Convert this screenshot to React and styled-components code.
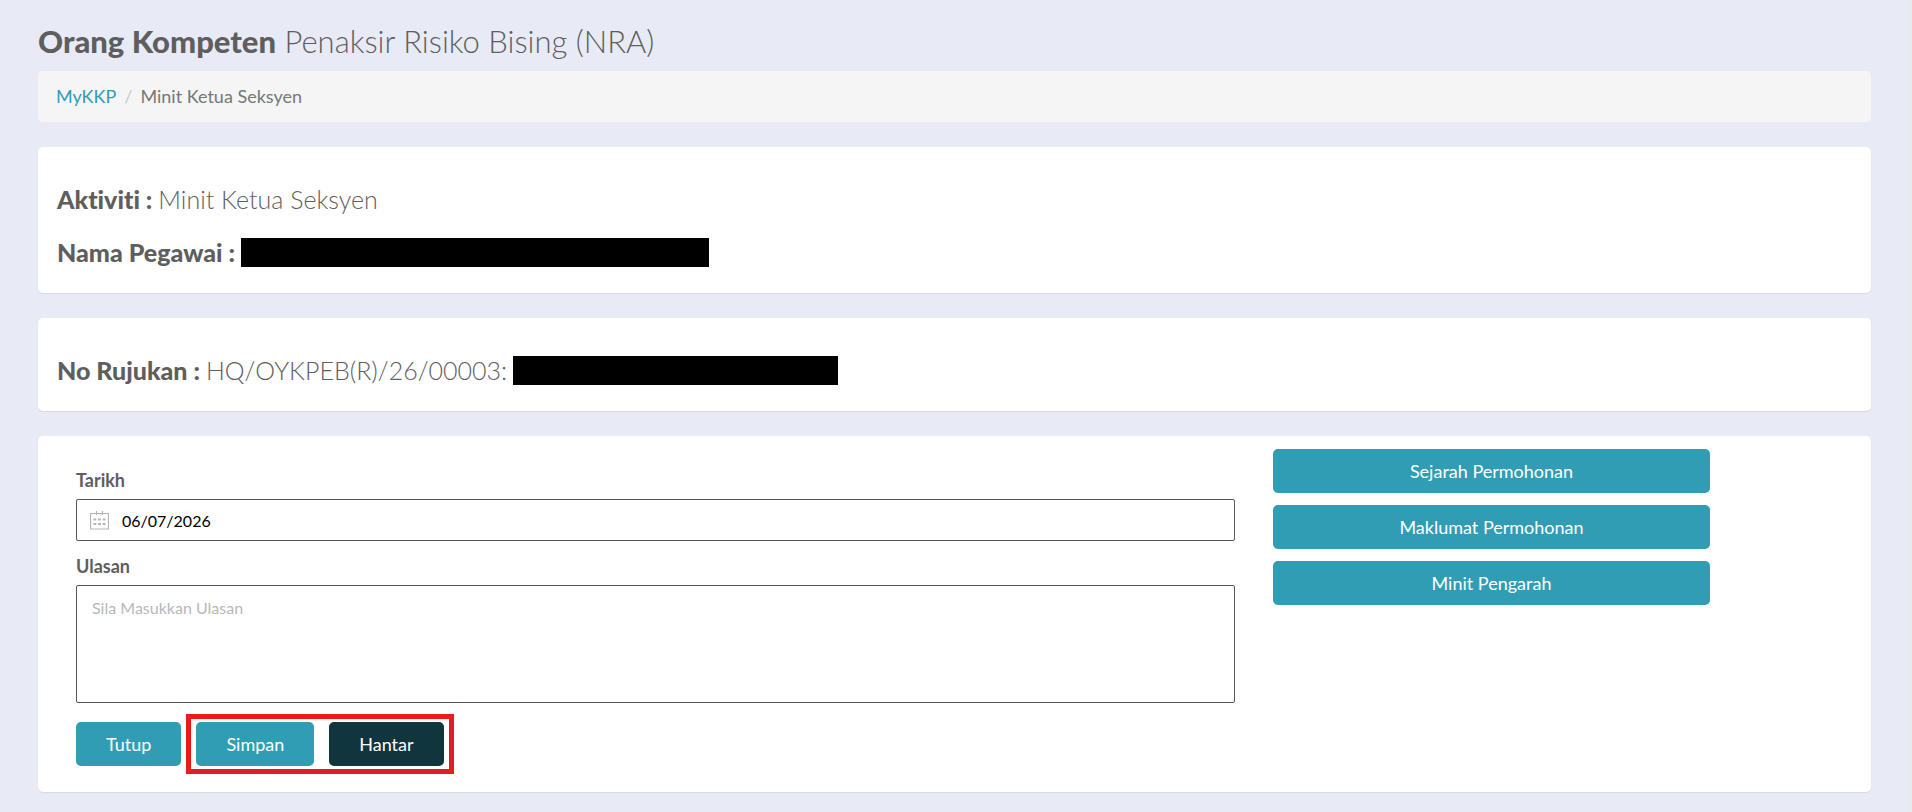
import React, { useState } from "react";
import styled, { createGlobalStyle } from "styled-components";

const GlobalStyle = createGlobalStyle`
  * {
    box-sizing: border-box;
  }
  html {
    min-height: 100%;
    background-color: #e8ebf5;
  }
  body {
    margin: 0;
    font-family: Lato, "Open Sans", sans-serif;
    font-size: 18px;
    font-variant-ligatures: none;
    color: #5e5e5e;
  }
`;

const Page = styled.main`
  min-height: 100vh;
  padding: 19px 37px 0 38px;
  border-right: 4px solid #e9e9eb;
`;

const Title = styled.h1`
  margin: 0 0 8px;
  font-size: 31px;
  line-height: 44px;
  font-weight: 300;

  strong {
    font-weight: 900;
  }
`;

const Breadcrumb = styled.nav`
  display: flex;
  gap: 8px;
  padding: 12px 18px;
  line-height: 27px;
  border-radius: 5px;
  background-color: #f5f5f5;
  color: #777777;
  margin-bottom: 25px;

  a {
    color: #309db5;
    text-decoration: none;
  }
`;

const Separator = styled.span`
  color: #cccccc;
`;

const Card = styled.section`
  display: flex;
  flex-direction: ${(props) => (props.$form ? "row" : "column")};
  gap: ${(props) => (props.$form ? "0" : "1px")};
  padding: ${(props) => (props.$form ? "13px 19px 18px" : "26px 19px 15px")};
  border-radius: 5px;
  background-color: #ffffff;
  box-shadow: 0 1px 1px rgba(0, 0, 0, 0.08);
  margin-bottom: 25px;

  &:last-child {
    margin-bottom: 20px;
  }
`;

const Detail = styled.h3`
  display: flex;
  align-items: center;
  gap: 6px;
  margin: 0;
  font-size: 25px;
  line-height: 52px;
  font-weight: 300;

  strong {
    font-weight: 900;
  }
`;

const Redacted = styled.span`
  width: ${(props) => props.$width}px;
  height: 29px;
  background-color: #000000;
`;

const Form = styled.form`
  width: 66.6667%;
  padding: 18px 19px 0;
`;

const Label = styled.label`
  display: block;
  font-weight: 700;
  line-height: 26px;
  margin-bottom: 6px;
`;

const DateField = styled.div`
  display: flex;
  align-items: center;
  gap: 13px;
  height: 42px;
  padding: 0 13px;
  border: 1px solid #555555;
  border-radius: 2px;
  margin-bottom: 12px;
`;

const DateInput = styled.input`
  flex: 1;
  padding: 0;
  border: 0;
  outline: 0;
  background: none;
  font-family: inherit;
  font-size: 16px;
  color: #000000;
`;

const Textarea = styled.textarea`
  display: block;
  width: 100%;
  height: 118px;
  padding: 10px 15px;
  border: 1px solid #555555;
  border-radius: 2px;
  resize: none;
  font-family: inherit;
  font-size: 16px;
  line-height: 24px;

  &::placeholder {
    color: #b8b8b8;
  }
`;

const Actions = styled.div`
  display: flex;
  align-items: center;
  gap: 5px;
  margin-top: 11px;
`;

const Highlight = styled.div`
  display: flex;
  gap: 15px;
  padding: 3px 5px;
  border: 5px solid #e81c1c;
`;

const Button = styled.button`
  height: 44px;
  padding: 0 30px;
  border: 0;
  border-radius: 5px;
  background-color: ${(props) => (props.$dark ? "#10353d" : "#309db5")};
  color: #ffffff;
  font-family: inherit;
  font-size: 18px;
  cursor: pointer;
`;

const Side = styled.aside`
  display: flex;
  flex-direction: column;
  gap: 12px;
  width: 26.5%;
  padding: 0 19px;
`;

const CalendarIcon = () => (
  <svg width="19" height="19" viewBox="0 0 19 19" fill="none" stroke="#b4b4b4" aria-hidden="true">
    <path d="M.5 2.5h18v15.5H.5zM6.5 0v4M12.5 0v4" strokeWidth="1.2" />
    <path d="M3.5 8.5h12M3.5 13h12" strokeWidth="2" strokeDasharray="2.8 1.8" />
  </svg>
);

const links = ["Sejarah Permohonan", "Maklumat Permohonan", "Minit Pengarah"];

const App = () => {
  const [date, setDate] = useState("06/07/2026");
  const [comment, setComment] = useState("");

  return (
    <>
      <GlobalStyle />
      <Page>
        <Title>
          <strong>Orang Kompeten</strong> Penaksir Risiko Bising (NRA)
        </Title>
        <Breadcrumb>
          <a href="#mykkp">MyKKP</a>
          <Separator>/</Separator>
          <span>Minit Ketua Seksyen</span>
        </Breadcrumb>
        <Card>
          <Detail>
            <strong>Aktiviti :</strong> Minit Ketua Seksyen
          </Detail>
          <Detail>
            <strong>Nama Pegawai :</strong>
            <Redacted $width={468} />
          </Detail>
        </Card>
        <Card>
          <Detail>
            <strong>No Rujukan :</strong> HQ/OYKPEB(R)/26/00003:
            <Redacted $width={325} />
          </Detail>
        </Card>
        <Card $form>
          <Form onSubmit={(e) => e.preventDefault()}>
            <Label htmlFor="tarikh">Tarikh</Label>
            <DateField>
              <CalendarIcon />
              <DateInput id="tarikh" value={date} onChange={(e) => setDate(e.target.value)} />
            </DateField>
            <Label htmlFor="ulasan">Ulasan</Label>
            <Textarea
              id="ulasan"
              placeholder="Sila Masukkan Ulasan"
              value={comment}
              onChange={(e) => setComment(e.target.value)}
            />
            <Actions>
              <Button type="button">Tutup</Button>
              <Highlight>
                <Button type="button">Simpan</Button>
                <Button type="submit" $dark>
                  Hantar
                </Button>
              </Highlight>
            </Actions>
          </Form>
          <Side>
            {links.map((link) => (
              <Button type="button" key={link}>
                {link}
              </Button>
            ))}
          </Side>
        </Card>
      </Page>
    </>
  );
};

export default App;
